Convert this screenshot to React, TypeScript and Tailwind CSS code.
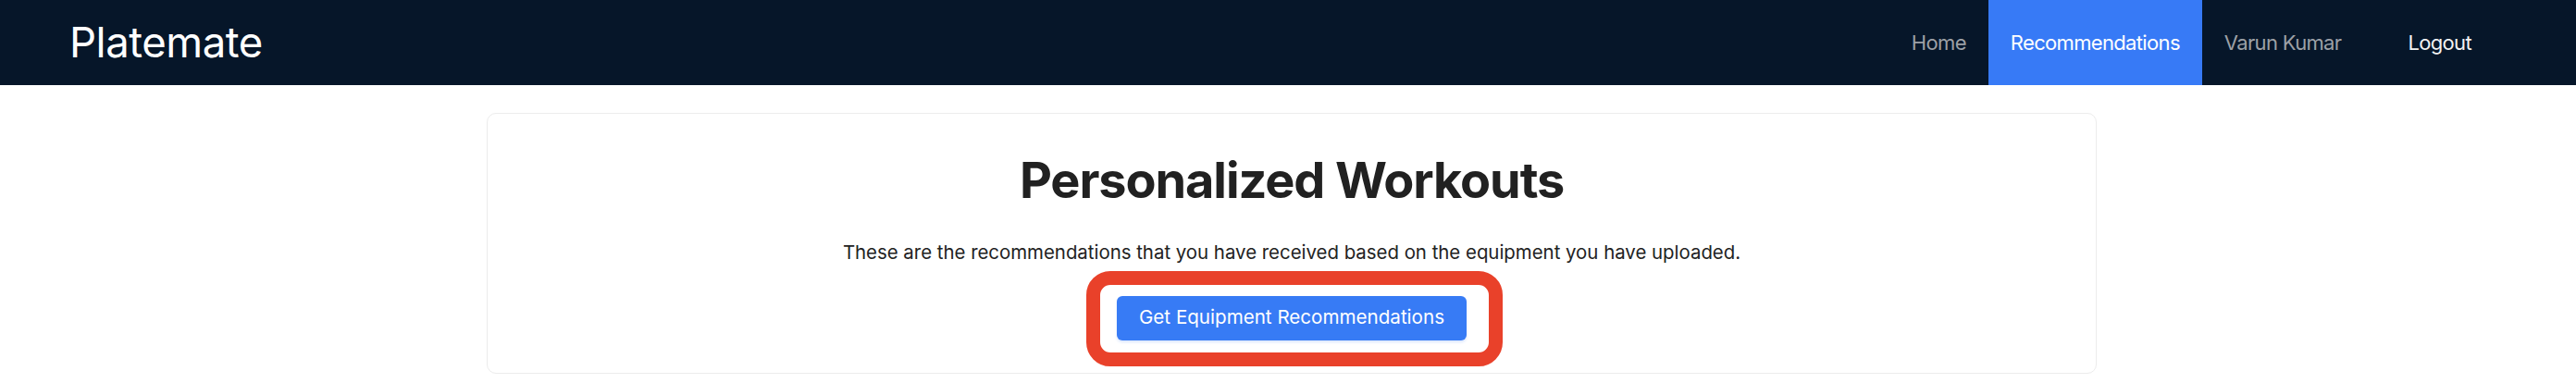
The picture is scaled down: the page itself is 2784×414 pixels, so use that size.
import type { ReactNode } from "react";

const navLinks = [
  { label: "Home", active: false },
  { label: "Recommendations", active: true },
  { label: "Varun Kumar", active: false },
];

export default function App() {
  return (
    <div className="min-h-screen bg-white font-['Inter','Noto_Sans',sans-serif] text-[#212121]">
      <nav className="flex h-[92px] items-stretch justify-between bg-[#061629] pl-[75px] pr-[89px]">
        <a href="#" className="flex items-center text-[45.5px] leading-none tracking-[-0.01em] text-white">
          Platemate
        </a>
        <ul className="flex items-stretch">
          {navLinks.map((link) => (
            <NavItem key={link.label} active={link.active}>
              {link.label}
            </NavItem>
          ))}
          <li className="ml-6 flex items-stretch">
            <button
              type="button"
              className="flex h-full items-center px-6 text-[22px] tracking-[-0.03em] text-[#f2f2f2]"
            >
              Logout
            </button>
          </li>
        </ul>
      </nav>

      <main className="pl-2 pt-[30px]">
        <section className="mx-auto flex w-[1740px] flex-col items-center rounded-[10px] border border-[#ececec] bg-white pb-[35px] pt-10">
          <h1 className="text-[54px] font-bold leading-[1.2] tracking-[-0.02em] text-[#212121]">
            Personalized Workouts
          </h1>
          <p className="mt-[30px] text-[20.4px] leading-[30px] text-[#222222]">
            These are the recommendations that you have received based on the
            equipment you have uploaded.
          </p>
          <div className="relative mt-8">
            <button
              type="button"
              className="h-12 rounded-md bg-[#377bf5] px-6 text-[20.6px] text-white shadow-[0_2px_3px_rgba(55,123,245,0.18)]"
            >
              Get Equipment Recommendations
            </button>
            {/* highlight drawn round the button in the screenshot */}
            <span className="pointer-events-none absolute -bottom-[28px] -left-[33px] -right-[39px] -top-[27px] rounded-[26px] border-[15px] border-[#e9412a]" />
          </div>
        </section>
      </main>
    </div>
  );
}

function NavItem({ active, children }: { active: boolean; children: ReactNode }) {
  return (
    <li className={active ? "flex items-stretch bg-[#377af6]" : "flex items-stretch"}>
      <a
        href="#"
        className={
          active
            ? "flex h-full items-center px-6 text-[22px] tracking-[-0.03em] text-white"
            : "flex h-full items-center px-6 text-[22px] tracking-[-0.03em] text-[#9ca0a6]"
        }
      >
        {children}
      </a>
    </li>
  );
}
